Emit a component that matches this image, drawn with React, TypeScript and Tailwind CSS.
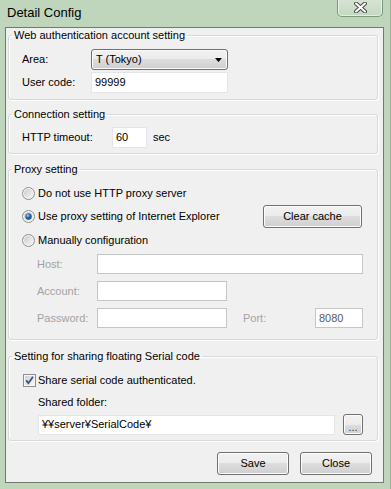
import React from "react";

const btnBg =
  "border border-[#707070] rounded-[3px] bg-[linear-gradient(to_bottom,#f2f2f2_0%,#ebebeb_50%,#dddddd_50%,#cfcfcf_100%)] shadow-[inset_0_0_0_1px_#fcfcfc]";

const Radio = ({ checked, id }: { checked?: boolean; id: string }) => (
  <svg width="13" height="13" viewBox="0 0 13 13" className="shrink-0">
    <defs>
      <linearGradient id={`rg-${id}`} x1="0" y1="0" x2="1" y2="1">
        <stop offset="0" stopColor="#cbcbcb" />
        <stop offset="1" stopColor="#f7f7f7" />
      </linearGradient>
      <radialGradient id={`rd-${id}`} cx="0.4" cy="0.35" r="0.7">
        <stop offset="0" stopColor="#a9d6f5" />
        <stop offset="0.45" stopColor="#2d6fb5" />
        <stop offset="1" stopColor="#123d6f" />
      </radialGradient>
    </defs>
    <circle cx="6.5" cy="6.5" r="6" fill="#f4f4f4" stroke="#8c8e8f" />
    <circle cx="6.5" cy="6.5" r="4.5" fill={`url(#rg-${id})`} />
    {checked && <circle cx="6.5" cy="6.5" r="3.2" fill={`url(#rd-${id})`} />}
  </svg>
);

const Check = () => (
  <svg width="13" height="13" viewBox="0 0 13 13" className="shrink-0">
    <defs>
      <linearGradient id="cb-bg" x1="0" y1="0" x2="1" y2="1">
        <stop offset="0" stopColor="#cfcfcf" />
        <stop offset="1" stopColor="#fbfbfb" />
      </linearGradient>
    </defs>
    <rect x="0.5" y="0.5" width="12" height="12" fill="#f6f6f6" stroke="#8c8e8f" />
    <rect x="2" y="2" width="9" height="9" fill="url(#cb-bg)" />
    <path d="M3.2 6.4 L5.4 9.2 L10 2.8" fill="none" stroke="#3b5796" strokeWidth="1.9" />
  </svg>
);

const Field = ({
  w,
  children,
  disabled,
  h = "h-[21px]",
}: {
  w: string;
  children?: React.ReactNode;
  disabled?: boolean;
  h?: string;
}) => (
  <div
    className={`${w} ${h} bg-white border ${disabled ? "border-[#c4c6c8] text-[#5a5a5a]" : "border-[#e3e5e8] text-black"} flex items-center pl-[3px]`}
  >
    {children}
  </div>
);

const Group = ({ title, children, className = "" }: { title: string; children: React.ReactNode; className?: string }) => (
  <fieldset
    className={`border border-[#d6d8da] rounded-[3px] pl-[13px] pr-[13px] shadow-[inset_1px_1px_0_#ffffff,1px_1px_0_#ffffff] ${className}`}
  >
    <legend className="-ml-[10px] px-[2px] leading-[15px] text-black">{title}</legend>
    {children}
  </fieldset>
);

export default function App() {
  return (
    <div className="w-[391px] h-[489px] bg-[#c0d6bc] flex flex-col pl-[5px] pr-[6px] pb-[6px] border-r border-[#98b594] font-['Liberation_Sans',Arial,sans-serif] text-[11px] text-black overflow-hidden">
      {/* title bar */}
      <div className="h-[27px] flex items-start justify-between shrink-0">
        <span className="text-[13px] leading-[16px] mt-[5px] ml-[2px] text-black">Detail Config</span>
        <div className="w-[46px] h-[18px] -mt-px mr-px rounded-b-[5px] border border-t-0 border-[#7c977a] bg-[linear-gradient(to_bottom,#d6e5d3,#c3d8c0)] shadow-[inset_0_0_0_1px_rgba(255,255,255,0.55)] flex items-center justify-center">
          <svg width="13" height="11" viewBox="0 0 13 11">
            <path d="M2 1.5 L11 9.5 M11 1.5 L2 9.5" stroke="#474747" strokeWidth="4" strokeLinecap="round" />
            <path d="M2 1.5 L11 9.5 M11 1.5 L2 9.5" stroke="#ffffff" strokeWidth="2" strokeLinecap="round" />
          </svg>
        </div>
      </div>

      {/* client area */}
      <div className="flex-1 flex flex-col border border-[#6d7d6b] bg-[#f0f0f0] pl-[2px] pr-[5px]">
        <Group title="Web authentication account setting">
          <div className="pt-[6px] pb-[6px] flex flex-col gap-[2px]">
            <div className="flex items-center h-[21px]">
              <span className="w-[69px]">Area:</span>
              <div className={`w-[137px] h-[21px] ${btnBg} flex items-center justify-between pl-[4px] pr-[5px]`}>
                <span>T (Tokyo)</span>
                <svg width="7" height="4" viewBox="0 0 7 4">
                  <path d="M0 0 H7 L3.5 4 Z" fill="#000" />
                </svg>
              </div>
            </div>
            <div className="flex items-center h-[21px]">
              <span className="w-[69px]">User code:</span>
              <Field w="w-[137px]">99999</Field>
            </div>
          </div>
        </Group>

        <Group title="Connection setting" className="mt-[7px]">
          <div className="pt-[5px] pb-[5px] flex items-center h-[31px]">
            <span className="w-[90px]">HTTP timeout:</span>
            <Field w="w-[35px]">60</Field>
            <span className="ml-[6px]">sec</span>
          </div>
        </Group>

        <Group title="Proxy setting" className="mt-[8px]">
          <div className="pt-[7px] pb-[11px] flex flex-col">
            <div className="flex items-center h-[18px] gap-[3px]">
              <Radio id="a" />
              <span>Do not use HTTP proxy server</span>
            </div>
            <div className="flex items-center h-[23px] mt-[3px] gap-[3px]">
              <Radio id="b" checked />
              <span>Use proxy setting of Internet Explorer</span>
              <div className={`ml-auto mr-[2px] w-[99px] h-[23px] ${btnBg} flex items-center justify-center`}>
                Clear cache
              </div>
            </div>
            <div className="flex items-center h-[18px] mt-[3px] gap-[3px]">
              <Radio id="c" />
              <span>Manually configuration</span>
            </div>
            <div className="flex items-center h-[20px] mt-[5px] pl-[15px] text-[#a3a3a3]">
              <span className="w-[60px]">Host:</span>
              <Field w="w-[266px]" h="h-[20px]" disabled />
            </div>
            <div className="flex items-center h-[20px] mt-[7px] pl-[15px] text-[#a3a3a3]">
              <span className="w-[60px]">Account:</span>
              <Field w="w-[130px]" h="h-[20px]" disabled />
            </div>
            <div className="flex items-center h-[20px] mt-[7px] pl-[15px] text-[#a3a3a3]">
              <span className="w-[60px]">Password:</span>
              <Field w="w-[130px]" h="h-[20px]" disabled />
              <span className="ml-[16px]">Port:</span>
              <div className="ml-auto mr-px">
                <Field w="w-[48px]" h="h-[20px]" disabled>
                  8080
                </Field>
              </div>
            </div>
          </div>
        </Group>

        <Group title="Setting for sharing floating Serial code" className="mt-[9px]">
          <div className="pt-[7px] pb-[5px] flex flex-col">
            <div className="flex items-center h-[18px] gap-[2px] pl-px">
              <Check />
              <span>Share serial code authenticated.</span>
            </div>
            <div className="flex items-center h-[18px] mt-[4px] pl-[16px]">Shared folder:</div>
            <div className="flex items-center h-[21px] mt-[3px] pl-[16px]">
              <Field w="w-[297px]" h="h-[20px]">¥¥server¥SerialCode¥</Field>
              <div className={`ml-[8px] w-[20px] h-[21px] ${btnBg} flex items-end justify-center pb-[3px] leading-[8px] text-[#333]`}>
                ...
              </div>
            </div>
          </div>
        </Group>

        <div className="flex justify-end gap-[11px] mt-[11px] mr-[6px]">
          <div className={`w-[72px] h-[23px] ${btnBg} flex items-center justify-center`}>Save</div>
          <div className={`w-[72px] h-[23px] ${btnBg} flex items-center justify-center`}>Close</div>
        </div>
      </div>
    </div>
  );
}
